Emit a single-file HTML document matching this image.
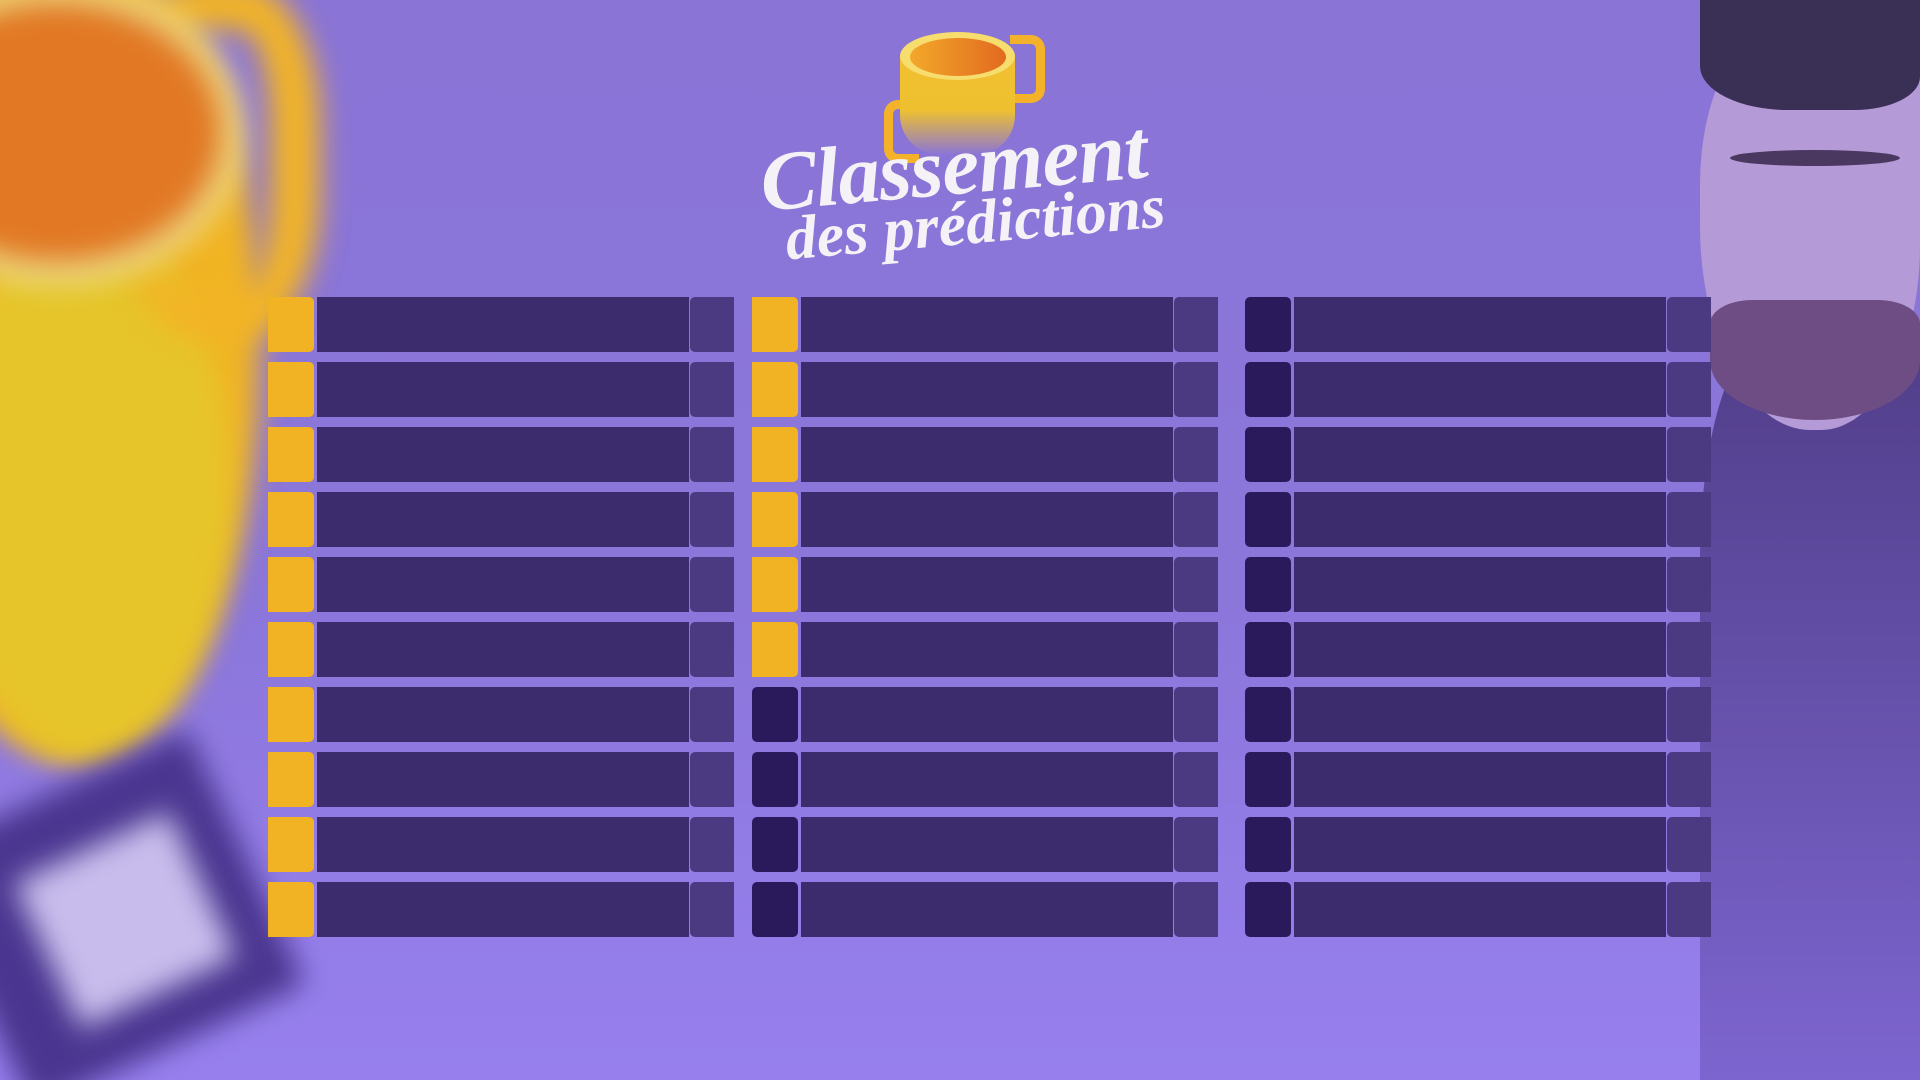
<!DOCTYPE html>
<html><head><meta charset="utf-8"><style>
html{margin:0;padding:0;width:1920px;height:1080px;overflow:hidden;background:#8b76da}
body{margin:0;padding:0;width:1920px;height:1080px;overflow:hidden}
#w{position:relative;width:1920px;height:1080px;overflow:hidden;contain:paint;
background:linear-gradient(180deg,#8a74d6 0%,#8b76da 55%,#9780ee 100%);font-family:"Liberation Sans",sans-serif}
.b{position:absolute}
.blur{filter:blur(14px)}
.r{position:absolute;height:55px}
.rk{position:absolute;left:0;width:46px;height:55px;border-radius:0 5px 5px 0}
.nm{position:absolute;left:49px;width:372px;height:55px;background:#3d2c6d}
.sc{position:absolute;left:422px;width:44px;height:55px;background:#4b3a82;border-radius:5px 0 0 5px}
.y{background:#f1b223}.d{background:#2a1a5c;border-radius:5px}
.t{position:absolute;color:#f4f2f6;font-family:"Liberation Serif",serif;font-style:italic;font-weight:bold;white-space:nowrap;transform:rotate(-5deg)}
</style></head><body><div id="w">
<!-- left blurred trophy -->
<div class="b blur" style="left:-120px;top:-40px;width:380px;height:800px;background:#f1b423;border-radius:45% 45% 50% 50%"></div>
<div class="b blur" style="left:-60px;top:220px;width:290px;height:540px;background:#e6c52a;border-radius:50%"></div>
<div class="b blur" style="left:120px;top:-20px;width:150px;height:260px;border:50px solid #f2b425;border-radius:40%;border-left:none"></div>
<div class="b blur" style="left:-130px;top:-20px;width:330px;height:260px;border:22px solid #ecdc8a;border-radius:50%;background:#e27824"></div>
<div class="b blur" style="left:-40px;top:780px;width:300px;height:280px;background:#4a3690;transform:rotate(-25deg)"></div>
<div class="b blur" style="left:40px;top:840px;width:170px;height:160px;background:#c8bcec;transform:rotate(-25deg)"></div>
<!-- right person -->
<div class="b" style="left:1700px;top:340px;width:220px;height:740px;background:linear-gradient(180deg,#4a3880,#7a62cc);border-radius:30% 0 0 0;opacity:.9"></div>
<div class="b" style="left:1700px;top:20px;width:220px;height:410px;background:#b49ad6;border-radius:40% 0 45% 50%"></div>
<div class="b" style="left:1700px;top:0px;width:220px;height:110px;background:#3a2f55;border-radius:0 0 30% 40%"></div>
<div class="b" style="left:1710px;top:300px;width:210px;height:120px;background:#6e4d84;border-radius:20% 20% 50% 50%"></div>
<div class="b" style="left:1730px;top:150px;width:170px;height:16px;background:#4a3860;border-radius:50%"></div>
<!-- cup -->
<div class="b" style="left:1010px;top:35px;width:26px;height:50px;border:9px solid #f4b22a;border-left:none;border-radius:0 14px 14px 0"></div>
<div class="b" style="left:884px;top:100px;width:26px;height:45px;border:9px solid #f4b22a;border-right:none;border-radius:14px 0 0 14px"></div>
<div class="b" style="left:900px;top:55px;width:115px;height:100px;background:linear-gradient(180deg,#f1c030,#eec030 55%,rgba(238,190,48,0));border-radius:0 0 40px 40px"></div>
<div class="b" style="left:900px;top:32px;width:115px;height:48px;background:#f7dc6e;border-radius:50%"></div>
<div class="b" style="left:910px;top:38px;width:96px;height:38px;background:linear-gradient(90deg,#f2a82a,#e26a20);border-radius:50%"></div>
<!-- title -->
<div class="t" style="left:760px;top:118px;font-size:84px;letter-spacing:-1px">Classement</div>
<div class="t" style="left:785px;top:188px;font-size:62px">des prédictions</div>
<div id="rows"></div>
</div>
<script>
var cols=[[268,10],[752,6],[1245,0]],h='';
cols.forEach(function(c){for(var i=0;i<10;i++){var y=297+i*65;
h+='<div class="r" style="left:'+c[0]+'px;top:'+y+'px;width:466px"><div class="rk '+(i<c[1]?'y':'d')+'"></div><div class="nm"></div><div class="sc"></div></div>';}});
document.getElementById('rows').innerHTML=h;
</script>
</body></html>
